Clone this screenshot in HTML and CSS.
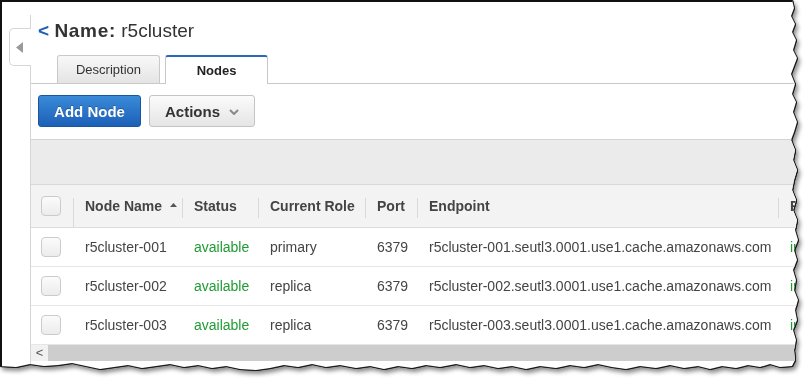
FILE: index.html
```html
<!DOCTYPE html>
<html lang="en">
<head>
    <meta charset="UTF-8">
    <title>Name: r5cluster – Nodes</title>
    <link rel="stylesheet" href="styles.css">
</head>
<body>
    <div class="shot">
        <div class="paper">
            <div class="side">
                <div class="side-tab">
                    <svg width="7" height="11" viewBox="0 0 7 11"><polygon points="7,0 7,11 0,5.5" fill="#9a9a9a"/></svg>
                </div>
            </div>

            <div class="main">
                <h1 class="title"><span class="back">&lt;</span> <b>Name:</b> r5cluster</h1>

                <div class="tabs">
                    <div class="tab">Description</div>
                    <div class="tab active">Nodes</div>
                </div>

                <div class="toolbar">
                    <a href="#" class="btn btn-primary">Add Node</a>
                    <a href="#" class="btn">Actions
                        <svg class="caret" width="10" height="6" viewBox="0 0 10 6"><path d="M1 1 L5 5 L9 1" fill="none" stroke="#8a8a8a" stroke-width="2"/></svg>
                    </a>
                </div>

                <div class="band"></div>

                <div class="grid">
                    <div class="row head">
                        <div class="cell check"><span class="box"></span></div>
                        <div class="cell sep first">Node Name
                            <svg class="sort" width="7" height="4" viewBox="0 0 7 4"><polygon points="0,4 7,4 3.5,0" fill="#555"/></svg>
                        </div>
                        <div class="cell sep">Status</div>
                        <div class="cell sep">Current Role</div>
                        <div class="cell sep">Port</div>
                        <div class="cell sep">Endpoint</div>
                        <div class="cell sep">R</div>
                    </div>

                    <div class="row">
                        <div class="cell check"><span class="box"></span></div>
                        <div class="cell">r5cluster-001</div>
                        <div class="cell ok">available</div>
                        <div class="cell">primary</div>
                        <div class="cell">6379</div>
                        <div class="cell">r5cluster-001.seutl3.0001.use1.cache.amazonaws.com</div>
                        <div class="cell ok">in</div>
                    </div>
                    <div class="row">
                        <div class="cell check"><span class="box"></span></div>
                        <div class="cell">r5cluster-002</div>
                        <div class="cell ok">available</div>
                        <div class="cell">replica</div>
                        <div class="cell">6379</div>
                        <div class="cell">r5cluster-002.seutl3.0001.use1.cache.amazonaws.com</div>
                        <div class="cell ok">in</div>
                    </div>
                    <div class="row">
                        <div class="cell check"><span class="box"></span></div>
                        <div class="cell">r5cluster-003</div>
                        <div class="cell ok">available</div>
                        <div class="cell">replica</div>
                        <div class="cell">6379</div>
                        <div class="cell">r5cluster-003.seutl3.0001.use1.cache.amazonaws.com</div>
                        <div class="cell ok">in</div>
                    </div>
                </div>

                <div class="hscroll">
                    <div class="hscroll-btn">&lt;</div>
                    <div class="hscroll-track"></div>
                </div>
            </div>
        </div>
    </div>
</body>
</html>
```

FILE: styles.css
```css
body {
    margin: 0;
    background: #fff;
    font-family: "Liberation Sans", Arial, sans-serif;
    color: #444;
    overflow: hidden;
}

/* Torn paper look: outline + soft shadow round the clipped sheet */
.shot {
    width: 810px;
    height: 387px;
    filter: drop-shadow(1px 0 0 #1a1a1a) drop-shadow(0 1px 0 #1a1a1a) drop-shadow(2px 3px 2px rgba(0,0,0,0.45));
}
.paper {
    box-sizing: border-box;
    width: 810px;
    height: 387px;
    display: flex;
    background: #fff;
    border-top: 2px solid #111;
    border-left: 2px solid #111;
    overflow: hidden;
    clip-path: polygon(0 0, 792px 0, 794px 8px, 791px 16px, 795px 24px, 792px 32px, 796px 40px, 793px 50px, 797px 58px, 794px 66px, 791px 74px, 795px 84px, 792px 94px, 796px 102px, 793px 112px, 797px 122px, 794px 132px, 791px 140px, 795px 150px, 793px 160px, 797px 170px, 794px 180px, 792px 190px, 796px 200px, 793px 210px, 797px 220px, 795px 230px, 798px 240px, 794px 250px, 797px 260px, 793px 270px, 796px 280px, 794px 290px, 798px 300px, 795px 310px, 797px 320px, 793px 330px, 796px 340px, 794px 350px, 795px 360px, 792px 366px, 780px 367px, 770px 364px, 760px 367px, 748px 365px, 736px 368px, 722px 366px, 710px 369px, 698px 366px, 684px 368px, 670px 365px, 656px 368px, 640px 366px, 626px 369px, 612px 367px, 598px 364px, 584px 367px, 570px 365px, 556px 368px, 540px 366px, 526px 369px, 512px 366px, 498px 368px, 484px 365px, 470px 367px, 456px 364px, 440px 367px, 426px 365px, 412px 368px, 398px 366px, 384px 369px, 370px 366px, 356px 368px, 340px 365px, 326px 367px, 312px 364px, 298px 367px, 284px 365px, 270px 368px, 256px 370px, 240px 369px, 226px 366px, 212px 368px, 198px 365px, 184px 367px, 170px 364px, 156px 366px, 142px 368px, 128px 365px, 114px 367px, 100px 369px, 86px 366px, 72px 363px, 58px 365px, 44px 366px, 30px 364px, 16px 367px, 0 366px);
}

/* Collapsed side panel */
.side {
    width: 28px;
    flex-shrink: 0;
}
.side-tab {
    position: relative;
    z-index: 1;
    box-sizing: border-box;
    width: 22px;
    height: 38px;
    margin: 26px 0 0 7px;
    background: #fff;
    border: 1px solid #d6d6d6;
    border-right: none;
    border-radius: 5px 0 0 5px;
    display: flex;
    align-items: center;
    justify-content: center;
    padding-right: 2px;
}

.main {
    flex: 1;
    min-width: 0;
    margin-top: 13px;
    border-left: 1px solid #d6d6d6;
    overflow: hidden;
}
.title {
    margin: 0;
    padding: 5px 0 0 7px;
    font-size: 19px;
    line-height: 22px;
    font-weight: normal;
    color: #333;
    white-space: nowrap;
}
.title b {
    font-weight: 700;
    letter-spacing: 0.7px;
}
.back {
    color: #1f5fb5;
    font-weight: 700;
}

/* Tabs */
.tabs {
    display: flex;
    gap: 5px;
    margin-top: 13px;
    padding-left: 26px;
    border-bottom: 1px solid #c9c9c9;
}
.tab {
    box-sizing: border-box;
    width: 103px;
    height: 28px;
    margin-bottom: -1px;
    display: flex;
    align-items: center;
    justify-content: center;
    font-size: 13px;
    color: #333;
    background: linear-gradient(#f8f8f8, #e4e4e4);
    border: 1px solid #c9c9c9;
    border-bottom: none;
    border-radius: 3px 3px 0 0;
}
.tab.active {
    height: 29px;
    background: #fff;
    font-weight: 700;
    color: #222;
    border-top: 2px solid #2a69b8;
}

/* Buttons */
.toolbar {
    display: flex;
    gap: 8px;
    padding: 11px 7px 12px;
}
.btn {
    box-sizing: border-box;
    height: 32px;
    padding: 0 15px 0 15px;
    display: flex;
    align-items: center;
    gap: 9px;
    font-size: 15px;
    font-weight: 700;
    color: #333;
    text-decoration: none;
    background: linear-gradient(#fbfbfb, #e5e5e5);
    border: 1px solid #c4c4c4;
    border-radius: 3px;
}
.btn-primary {
    width: 103px;
    justify-content: center;
    padding: 0;
    color: #fff;
    background: linear-gradient(#3a8ad8, #1c60b8);
    border-color: #1a55a0;
    text-shadow: 0 -1px 0 rgba(0,0,0,0.25);
}
.caret {
    margin-top: 1px;
}

.band {
    height: 44px;
    background: #ebebeb;
    border-top: 1px solid #d4d4d4;
}

/* Node table */
.grid {
    width: 950px;
}
.row {
    box-sizing: border-box;
    display: grid;
    grid-template-columns: 42px 109px 76px 107px 52px 361px 203px;
    height: 39px;
    align-items: center;
    border-bottom: 1px solid #e6e6e6;
    font-size: 14px;
}
.row.head {
    height: 44px;
    background: #f3f3f3;
    border-top: 1px solid #d8d8d8;
    border-bottom: 1px solid #dcdcdc;
    font-weight: 700;
    color: #444;
}
.cell {
    padding-left: 12px;
    white-space: nowrap;
    overflow: hidden;
}
.row .cell.check {
    padding-left: 10px;
    display: flex;
    align-items: center;
}
.head .cell {
    position: relative;
    align-self: stretch;
    display: flex;
    align-items: center;
    gap: 8px;
}
.head .sep::before {
    content: "";
    position: absolute;
    left: 0;
    top: 13px;
    height: 20px;
    border-left: 1px solid #d9d9d9;
}
.head .sep.first::before {
    height: 30px;
}
.sort {
    margin-top: -2px;
}
.ok {
    color: #1f9c33;
}
.box {
    box-sizing: border-box;
    width: 20px;
    height: 20px;
    border: 1px solid #cbcbcb;
    border-radius: 4px;
    background: linear-gradient(#fbfbfb, #ececec);
}

/* Horizontal scroll bar */
.hscroll {
    display: flex;
    height: 16px;
}
.hscroll-btn {
    width: 17px;
    background: #f1f1f1;
    font-size: 13px;
    line-height: 16px;
    text-align: center;
    color: #555;
}
.hscroll-track {
    flex: 1;
    background: #cdcdcd;
}
```
